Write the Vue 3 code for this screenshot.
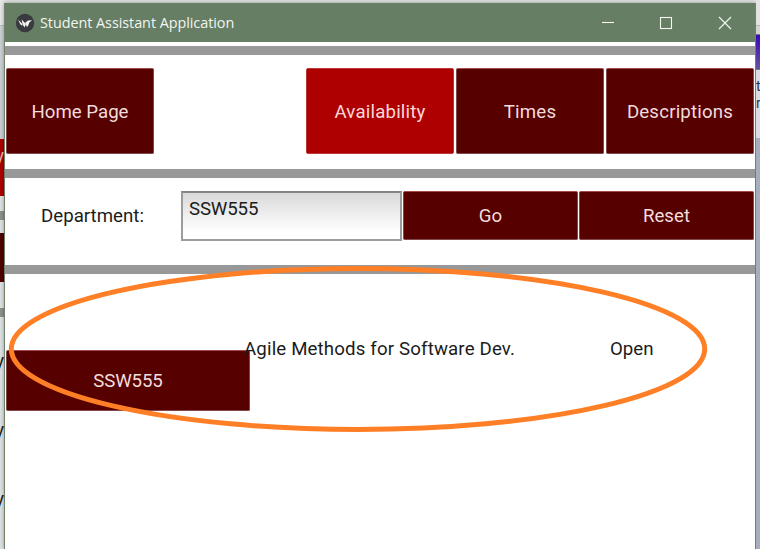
<script setup>
const tabs = [
  { label: 'Availability', active: true },
  { label: 'Times', active: false },
  { label: 'Descriptions', active: false },
]
const course = { code: 'SSW555', title: 'Agile Methods for Software Dev.', status: 'Open' }
</script>

<template>
  <div class="desktop">
    <div class="behind behind-left">
      <div class="l-head"></div>
      <div class="l-gap"></div>
      <div class="l-red"><span>y</span></div>
      <div class="l-space"></div>
      <div class="l-bar"></div>
      <div class="l-space"></div>
      <div class="l-dark"></div>
      <div class="l-space2"></div>
      <div class="l-bar"></div>
      <div class="l-list"><span>y</span><span>y</span><span>y</span></div>
    </div>

    <div class="window">
      <header class="titlebar">
        <svg class="logo" width="20" height="20" viewBox="0 0 20 20">
          <circle cx="10" cy="10" r="9.2" fill="#3a3a3e" />
          <path d="M3 6.6 L6.8 10.2 L7.4 12.8 L5.4 11.6 Z M6.6 6.4 L11 11 L9.6 14.4 L7.6 11.6 Z M10.4 9.6 L13 7.4 L17 7.3 L14.4 9.6 L12.8 13.4 L11.6 13.6 Z" fill="#f4f4f4" />
        </svg>
        <span class="title">Student Assistant Application</span>
        <svg class="controls" width="132" height="16" viewBox="0 0 132 16" fill="none" stroke="#f5f8f4" stroke-width="1.1">
          <path d="M0 7.5 H12" />
          <rect x="58.5" y="2.5" width="11" height="11" />
          <path d="M117 2 L129 14 M129 2 L117 14" />
        </svg>
      </header>

      <div class="rule first"></div>
      <nav class="nav">
        <button class="btn">Home Page</button>
        <span class="spacer"></span>
        <button v-for="t in tabs" :key="t.label" class="btn tab" :class="{ active: t.active }">{{ t.label }}</button>
      </nav>
      <div class="rule"></div>
      <div class="search">
        <label class="dept">Department:</label>
        <div class="field">SSW555</div>
        <button class="btn">Go</button>
        <button class="btn">Reset</button>
      </div>
      <div class="rule"></div>

      <div class="results">
        <button class="btn code">{{ course.code }}</button>
        <span class="name">{{ course.title }}</span>
        <span class="status">{{ course.status }}</span>
      </div>
    </div>

    <div class="behind behind-right">
      <div class="r-head"></div>
      <div class="r-bar"></div>
      <div class="r-purple"></div>
      <div class="r-text"><span>t</span><span>r</span></div>
      <div class="r-rest"></div>
    </div>

    <svg class="annotation" width="760" height="549" viewBox="0 0 760 549">
      <ellipse cx="358" cy="349" rx="346.7" ry="80.5" fill="none" stroke="#ff7f27" stroke-width="5" />
    </svg>
  </div>
</template>

<style>
body {
  margin: 0;
  overflow: hidden;
}
</style>

<style scoped>
.desktop {
  position: relative;
  display: grid;
  grid-template-columns: 4px 752px 4px;
  width: 760px;
  height: 549px;
  overflow: hidden;
  background: #dfe0e0;
  font-family: Roboto, sans-serif;
  font-size: 18.67px;
  color: #1b1b1b;
}
.behind {
  display: flex;
  flex-direction: column;
  height: 549px;
  overflow: hidden;
}
.behind > div { flex-shrink: 0; }
.behind-left { background: #dfe2e3; }
.l-head { height: 25px; background: #e6e6e6; border-bottom: 1px solid #b9bcbc; }
.l-gap { height: 113px; background: #cbd0d3; }
.l-red {
  display: flex;
  justify-content: flex-end;
  height: 57px;
  background: #ad0000;
  color: #e6b4b4;
}
.l-red span { margin-top: 6px; }
.l-space { height: 15px; }
.l-space + .l-dark { margin-top: -2px; }
.l-space2 { height: 26px; }
.l-bar { height: 9px; background: #8f8f8f; }
.l-dark { height: 49px; background: #500000; }
.l-list {
  display: flex;
  flex-direction: column;
  align-items: flex-end;
  padding-top: 33px;
}
.l-list span { height: 69px; line-height: 22px; }

.window {
  display: flex;
  flex-direction: column;
  box-sizing: border-box;
  height: 546px;
  margin-top: 3px;
  border: 1px solid #6d816b;
  border-width: 0 1px;
  background: #fff;
  box-shadow: 0 0 4px rgba(0, 0, 0, 0.35);
}
.titlebar {
  display: flex;
  align-items: center;
  height: 39px;
  padding-left: 10px;
  background: #667e64;
}
.title {
  margin-left: 5px;
  font-family: "Open Sans", "Noto Sans", sans-serif;
  font-size: 14.4px;
  letter-spacing: -0.05px;
  color: #f2f5f1;
}
.controls { margin-left: auto; margin-right: 21px; }
.rule {
  flex: none;
  box-sizing: border-box;
  height: 9px;
  background: #989898;
}
.rule.first { margin-top: 4px; }
.nav {
  display: grid;
  grid-template-columns: repeat(5, 148px);
  column-gap: 2px;
  height: 86px;
  padding: 13px 0 15px 1px;
}
.nav .btn { padding-top: 2px; }
.btn {
  box-sizing: border-box;
  margin: 0;
  padding: 0;
  border: 1px solid #804848;
  border-top-color: #a34c4c;
  border-radius: 2px;
  background: #560000;
  color: #f2dcdc;
  font: inherit;
}
.btn.tab { letter-spacing: 0.18px; }
.btn.active {
  border-color: #b93737;
  background: #ae0000;
  color: #fbd9d9;
}
.search {
  display: grid;
  grid-template-columns: 175px 221px 176px 176px;
  height: 50px;
  padding: 13px 0 24px 1px;
}
.search .btn { width: 175px; height: 49px; margin-left: 1px; }
.dept { align-self: center; text-align: center; padding-right: 2px; }
.field {
  box-sizing: border-box;
  height: 50px;
  padding: 5px 6px;
  border: 2px solid #9c9c9c;
  border-top-color: #858585;
  background: linear-gradient(#dadada, #fff 85%);
  line-height: 22px;
  letter-spacing: -0.15px;
}
.results {
  display: grid;
  grid-template-columns: 244px 1fr 145px;
  padding: 76px 0 0 1px;
}
.code { height: 61px; letter-spacing: -0.15px; }
.name { margin: -12px 0 0 -6px; line-height: 22px; letter-spacing: 0.15px; }
.status { margin: -12px 0 0 0; line-height: 22px; }

.behind-right { background: #adb5c4; }
.r-head { height: 25px; background: #e2e2e2; border-bottom: 1px solid #b4b4b4; }
.r-bar { height: 8px; background: #d2d2d2; border-bottom: 1px solid #77777d; }
.r-purple { height: 34px; background: linear-gradient(#3908bd, #66549c); border-bottom: 1px solid #77777d; }
.r-text {
  display: flex;
  flex-direction: column;
  height: 68px;
  background: #dcdce2;
  font-size: 14px;
  line-height: 17px;
  color: #33334a;
}
.r-text span:first-child { margin-top: 8px; }
.r-rest { flex: 1; background: #a6aebd; }
.annotation {
  position: absolute;
  inset: 0;
  pointer-events: none;
}
</style>
